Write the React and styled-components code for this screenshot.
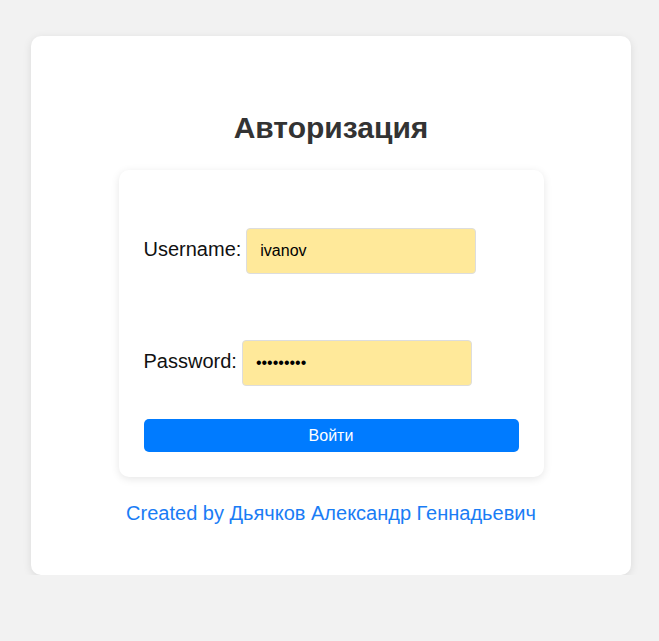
import React, { useState } from 'react'
import styled, { createGlobalStyle } from 'styled-components'

const GlobalStyle = createGlobalStyle`
  body {
    margin: 0;
    background: #f2f2f2;
    font-family: "Liberation Sans", Arial, sans-serif;
  }
`

const Page = styled.div`
  display: flex;
  justify-content: center;
  padding: 36px 0 0 3px;
`

const Card = styled.div`
  width: 600px;
  background: #fff;
  border-radius: 10px;
  box-shadow: 0 2px 8px rgba(0, 0, 0, 0.1);
  padding: 40px 0 50px;
  display: flex;
  flex-direction: column;
  align-items: center;
`

const Title = styled.h1`
  margin: 33px 0 24px;
  font-size: 30px;
  line-height: 37px;
  font-weight: bold;
  color: #333;
`

const Form = styled.form`
  width: 425px;
  box-sizing: border-box;
  padding: 25px;
  background: #fff;
  border-radius: 10px;
  box-shadow: 0 2px 8px rgba(0, 0, 0, 0.1);
  display: flex;
  flex-direction: column;
`

const Row = styled.div`
  display: flex;
  align-items: baseline;
  margin: 33px 0;
`

const Label = styled.label`
  font-size: 20px;
  color: #111;
  margin-right: 5px;
`

const Input = styled.input`
  width: 230px;
  height: 46px;
  box-sizing: border-box;
  padding: 0 13px;
  font-size: 16px;
  font-family: "Liberation Sans", Arial, sans-serif;
  color: #000;
  background: #ffe99a;
  border: 1px solid #ddd;
  border-radius: 4px;
  outline: none;
`

const Button = styled.button`
  height: 33px;
  border: none;
  border-radius: 5px;
  background: #007bff;
  color: #fff;
  font-size: 16px;
  font-family: "Liberation Sans", Arial, sans-serif;
  cursor: pointer;
`

const Footer = styled.p`
  margin: 25px 0 0;
  font-size: 20px;
  line-height: 23px;
  color: #1a7cf5;
`

const App = () => {
  const [form, setForm] = useState({ username: 'ivanov', password: '123456789' })

  return (
    <Page>
      <GlobalStyle />
      <Card>
        <Title>Авторизация</Title>
        <Form onSubmit={(e) => e.preventDefault()}>
          <Row>
            <Label htmlFor="username">Username:</Label>
            <Input id="username" type="text" value={form.username}
              onChange={(e) => setForm({ ...form, username: e.target.value })} />
          </Row>
          <Row>
            <Label htmlFor="password">Password:</Label>
            <Input id="password" type="password" value={form.password}
              onChange={(e) => setForm({ ...form, password: e.target.value })} />
          </Row>
          <Button type="submit">Войти</Button>
        </Form>
        <Footer>Created by Дьячков Александр Геннадьевич</Footer>
      </Card>
    </Page>
  )
}

export default App
